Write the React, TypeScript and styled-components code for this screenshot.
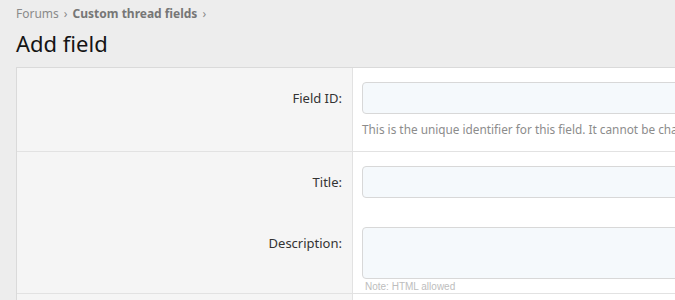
import React from "react";
import styled, { createGlobalStyle } from "styled-components";

const Global = createGlobalStyle`
  html, body { margin: 0; padding: 0; background: #ededed; overflow: hidden; }
  body { font-family: "Segoe UI", "Noto Sans", "Open Sans", sans-serif; color: #141414; }
`;

const Page = styled.div`
  padding: 0 0 0 16px;
  width: 1200px;
`;

const Crumbs = styled.nav`
  display: flex;
  align-items: center;
  gap: 5px;
  height: 26px;
  font-size: 12px;
  color: #8a8a8a;
`;

const Crumb = styled.span<{ $strong?: boolean }>`
  font-weight: ${(p) => (p.$strong ? 700 : 400)};
  color: ${(p) => (p.$strong ? "#767676" : "#8a8a8a")};
`;

const Chevron = styled.span`
  font-size: 12px;
  color: #8a8a8a;
`;

const Title = styled.h1`
  margin: 0;
  font-size: 22px;
  font-weight: 400;
  line-height: 34px;
  height: 41px;
  color: #141414;
`;

const Panel = styled.div`
  border: 1px solid #dadada;
  border-right: none;
  background: #fff;
  width: 1100px;
`;

const Row = styled.div<{ $sep?: boolean }>`
  display: grid;
  grid-template-columns: 336px 1fr;
  border-bottom: ${(p) => (p.$sep ? "1px solid #e2e2e2" : "none")};
`;

const Label = styled.div<{ $pad: number }>`
  background: #f5f5f5;
  border-right: 1px solid #e2e2e2;
  text-align: right;
  padding: ${(p) => p.$pad}px 10px 0 0;
  font-size: 13px;
  color: #333333;
`;

const Filler = styled.div`
  background: #f5f5f5;
  border-right: 1px solid #e2e2e2;
  height: 40px;
`;

const Control = styled.div<{ $top: number; $bottom: number }>`
  padding: ${(p) => p.$top}px 0 ${(p) => p.$bottom}px 9px;
`;

const Input = styled.div<{ $h: number }>`
  height: ${(p) => p.$h - 2}px;
  border: 1px solid #d8d8d8;
  border-radius: 4px;
  background: #f5f9fc;
`;

const Hint = styled.div`
  margin-top: 7px;
  font-size: 11.8px;
  line-height: 16px;
  color: #8c8c8c;
  white-space: nowrap;
`;

const Note = styled.div`
  margin-top: 2px;
  font-family: "Liberation Sans Narrow", "Arial Narrow", "Liberation Sans", sans-serif;
  font-size: 10px;
  line-height: 12px;
  color: #bdbdbd;
  padding-left: 3px;
`;

export default function App() {
  return (
    <>
      <Global />
      <Page>
        <Crumbs>
          <Crumb>Forums</Crumb>
          <Chevron>›</Chevron>
          <Crumb $strong>Custom thread fields</Crumb>
          <Chevron>›</Chevron>
        </Crumbs>
        <Title>Add field</Title>
        <Panel>
          <Row $sep>
            <Label $pad={21}>Field ID:</Label>
            <Control $top={14} $bottom={14}>
              <Input $h={32} />
              <Hint>This is the unique identifier for this field. It cannot be changed once set.</Hint>
            </Control>
          </Row>
          <Row>
            <Label $pad={21}>Title:</Label>
            <Control $top={14} $bottom={14}>
              <Input $h={32} />
            </Control>
          </Row>
          <Row $sep>
            <Label $pad={22}>Description:</Label>
            <Control $top={15} $bottom={0}>
              <Input $h={52} />
              <Note>Note: HTML allowed</Note>
            </Control>
          </Row>
          <Row>
            <Filler />
            <Control $top={0} $bottom={0} />
          </Row>
        </Panel>
      </Page>
    </>
  );
}
